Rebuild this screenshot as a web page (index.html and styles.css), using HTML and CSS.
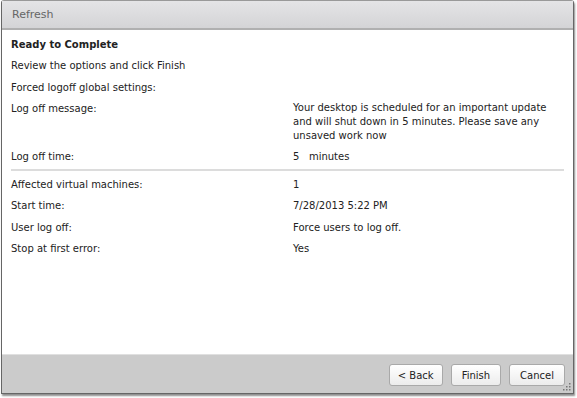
FILE: index.html
```html
<!DOCTYPE html>
<html>
<head>
<meta charset="utf-8">
<link rel="stylesheet" href="styles.css">
</head>
<body>
<div class="window">
  <div class="titlebar">Refresh</div>
  <div class="content">
    <div class="heading">Ready to Complete</div>
    <div class="line">Review the options and click Finish</div>
    <div class="line sub">Forced logoff global settings:</div>
    <div class="row">
      <div class="label">Log off message:</div>
      <div class="value msg">Your desktop is scheduled for an important update and will shut down in 5 minutes. Please save any unsaved work now</div>
    </div>
    <div class="row">
      <div class="label">Log off time:</div>
      <div class="value">5&nbsp;&nbsp;&nbsp;minutes</div>
    </div>
    <div class="sep"></div>
    <div class="row">
      <div class="label">Affected virtual machines:</div>
      <div class="value">1</div>
    </div>
    <div class="row">
      <div class="label">Start time:</div>
      <div class="value">7/28/2013 5:22 PM</div>
    </div>
    <div class="row">
      <div class="label">User log off:</div>
      <div class="value">Force users to log off.</div>
    </div>
    <div class="row">
      <div class="label">Stop at first error:</div>
      <div class="value">Yes</div>
    </div>
  </div>
  <div class="footer">
    <button class="btn back">&lt; Back</button>
    <button class="btn">Finish</button>
    <button class="btn">Cancel</button>
    <svg class="grip" width="8" height="8" viewBox="0 0 8 8">
      <rect x="6" y="0" width="1.5" height="1.5" fill="#777"/>
      <rect x="3" y="3" width="1.5" height="1.5" fill="#777"/>
      <rect x="6" y="3" width="1.5" height="1.5" fill="#777"/>
      <rect x="0" y="6" width="1.5" height="1.5" fill="#777"/>
      <rect x="3" y="6" width="1.5" height="1.5" fill="#777"/>
      <rect x="6" y="6" width="1.5" height="1.5" fill="#777"/>
    </svg>
  </div>
</div>
</body>
</html>
```
FILE: styles.css
```css
html, body {
  margin: 0;
  padding: 0;
  background: #fff;
}
body {
  width: 577px;
  height: 398px;
  overflow: hidden;
  font-family: "DejaVu Sans", Verdana, sans-serif;
  font-size: 10px;
  color: #222;
}
.window {
  margin-left: 1px;
  width: 571px;
  height: 392px;
  border: 1px solid #666;
  border-top-color: #999;
  border-radius: 3px 3px 0 0;
  box-shadow: 1px 2px 2px rgba(0,0,0,0.45);
  display: flex;
  flex-direction: column;
  background: #fff;
}
.titlebar {
  height: 29px;
  flex: none;
  box-sizing: border-box;
  padding: 0 10px;
  display: flex;
  align-items: center;
  background: linear-gradient(#e4e4e6, #d4d4d6);
  border-bottom: 2px solid #b0b0b0;
  color: #666;
  font-size: 11px;
}
.content {
  flex: 1;
  padding: 7px 9px 0 9px;
}
.heading {
  font-weight: bold;
  height: 16px;
  line-height: 16px;
  margin-bottom: 5px;
}
.line {
  height: 16px;
  line-height: 16px;
  margin-bottom: 6px;
}
.line.sub {
  margin-bottom: 2px;
}
.row {
  display: flex;
  padding: 3px 0;
  height: 15.5px;
  line-height: 15px;
}
.row:has(.msg) {
  height: auto;
}
.label {
  width: 282px;
  flex: none;
}
.value {
  flex: 1;
}
.msg {
  line-height: 14px;
  padding-right: 10px;
}
.sep {
  height: 2px;
  background: #dcdcdc;
  margin: 1px 0 3px 0;
}
.footer {
  height: 38px;
  flex: none;
  background: #cbcbcb;
  border-top: 1px solid #e0e0e0;
  display: flex;
  justify-content: flex-end;
  align-items: center;
  gap: 8px;
  padding-right: 8px;
  position: relative;
}
.btn {
  height: 22px;
  padding: 0 10px;
  margin-top: 2px;
  border: 1px solid #a9a9a9;
  border-radius: 3px;
  background: linear-gradient(#ffffff, #ececec);
  font-family: "DejaVu Sans", Verdana, sans-serif;
  font-size: 10px;
  color: #222;
}
.btn.back {
  width: 54px;
  padding: 0;
}
.grip {
  position: absolute;
  right: 2px;
  bottom: 2px;
}
```
